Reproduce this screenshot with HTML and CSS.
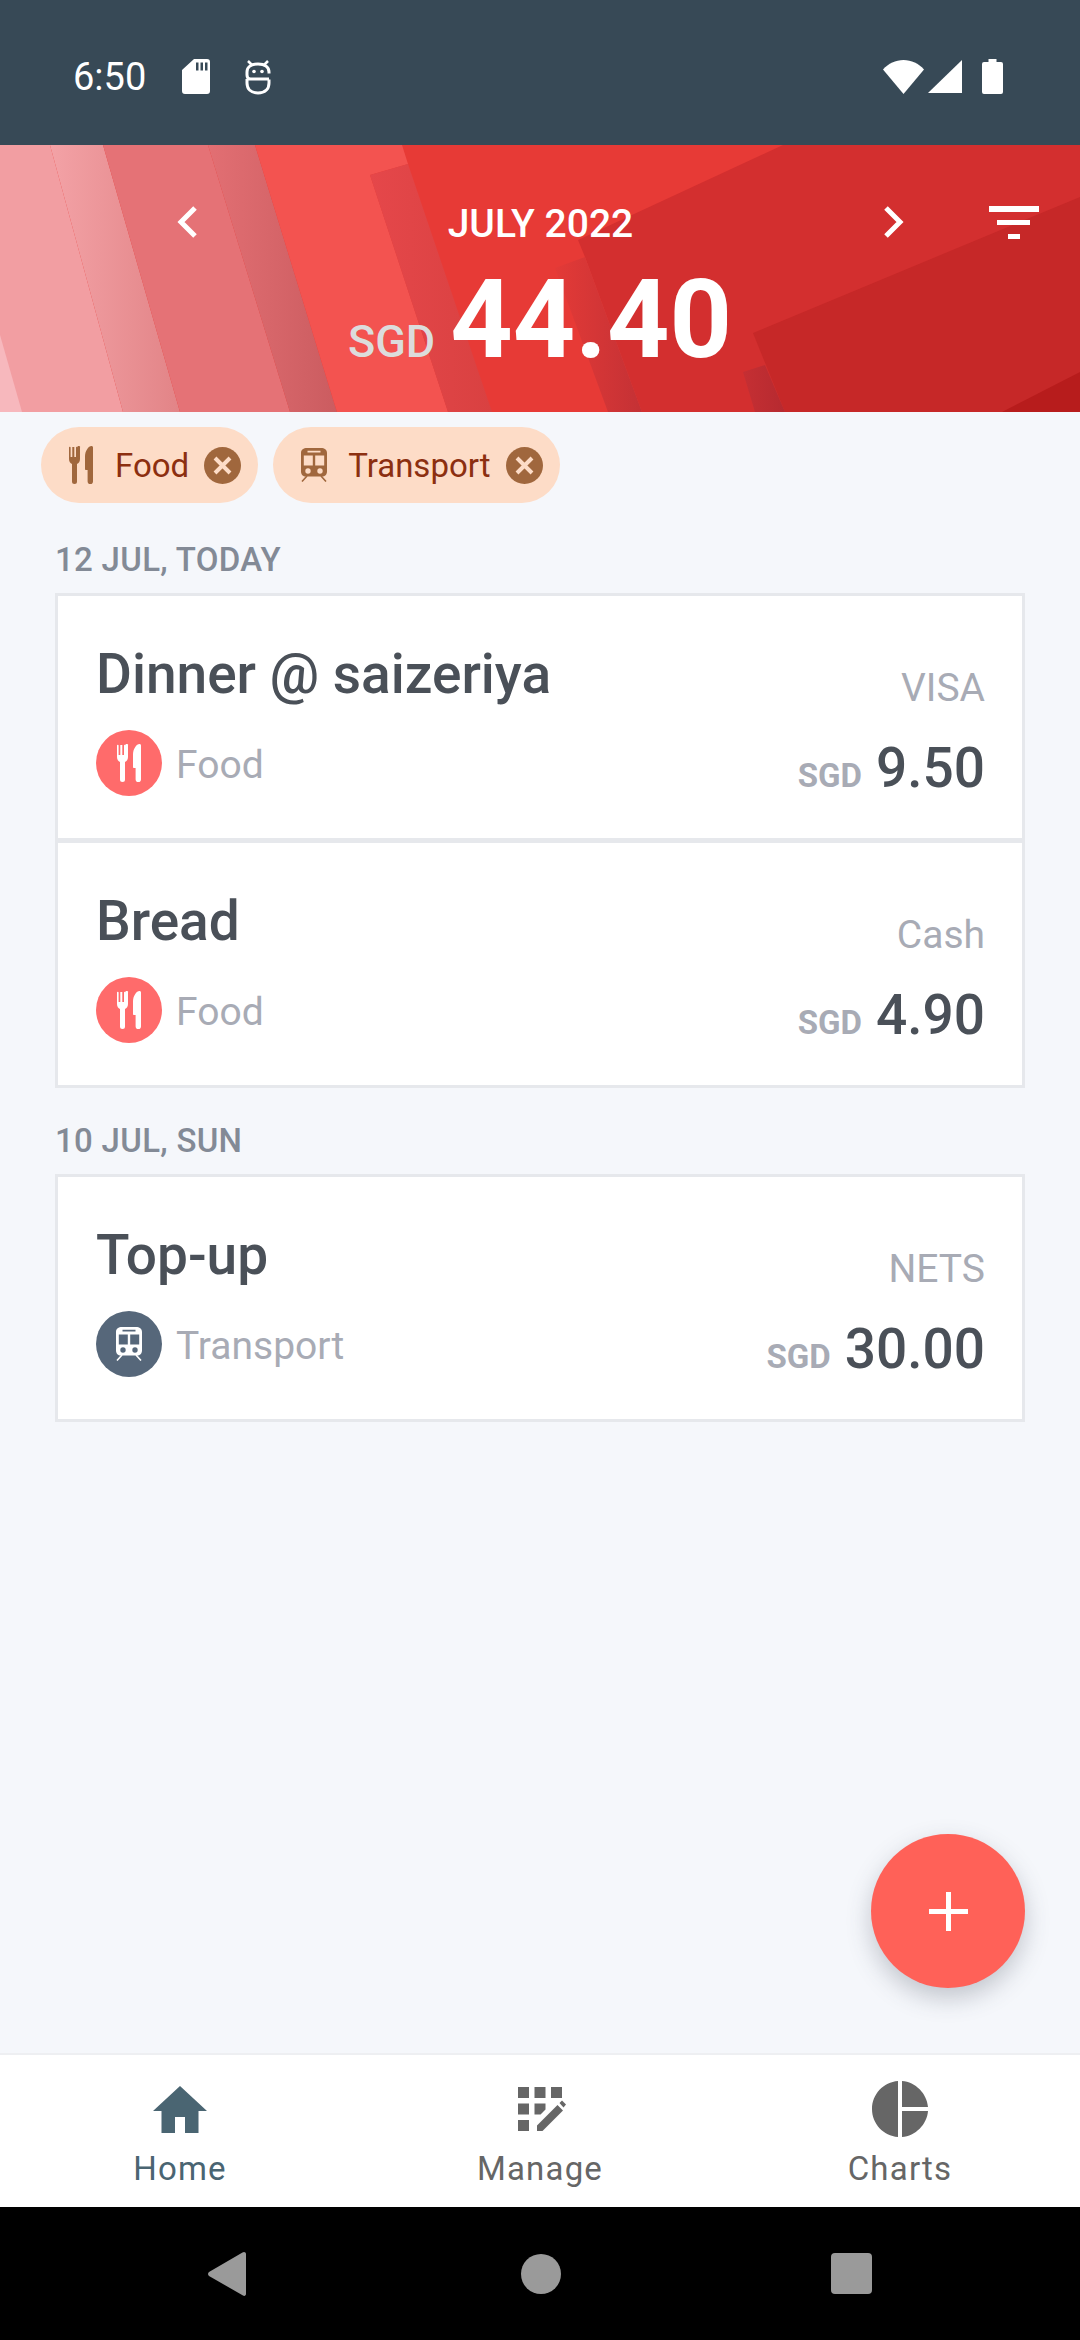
FILE: index.html
```html
<!DOCTYPE html>
<html lang="en">
<head>
    <meta charset="UTF-8">
    <title>Expenses</title>
    <link rel="stylesheet" href="styles.css">
</head>
<body>
    <svg class="defs" width="0" height="0">
        <symbol id="food" viewBox="0 0 24 38">
            <path d="M0 1.500a.8.8 0 0 1 1.600 0V11h1.700V1h2v10h1.700V1.500a.8.8 0 0 1 1.600 0V0h0 1.400a1 1 0 0 1 1 1.500V13c0 2.500-1.300 4.300-3 5v17.500a2.500 2.500 0 0 1-5 0V18c-1.700-.7-3-2.500-3-5z"/>
            <path d="M22.500 0c.9 0 1.500.6 1.500 1.500v34a2.700 2.700 0 0 1-5.400 0V24h-1.800c-.5 0-.8-.3-.8-.8V10C16 5 19.500 0 22.500 0z"/>
        </symbol>
        <symbol id="train" viewBox="0 0 26 34">
            <path fill-rule="evenodd" d="M6 0h14c3.500 0 6 1.500 6 5v18.500c0 3-2 5-5 5H5c-3 0-5-2-5-5V5c0-3.500 2.500-5 6-5zM6.500 2.800v1.700h13V2.800zM2.800 7.500v10h9v-10zm11.400 0v10h9v-10zM7 20.300a2.700 2.700 0 1 0 0 5.400 2.700 2.700 0 0 0 0-5.400zm12 0a2.700 2.700 0 1 0 0 5.400 2.700 2.700 0 0 0 0-5.400z"/>
            <path d="M6 28l-5 5.500M20 28l5 5.500" stroke="currentColor" stroke-width="1.600" fill="none"/>
        </symbol>
        <symbol id="clear" viewBox="0 0 37 37">
            <circle cx="18.500" cy="18.500" r="18.500"/>
            <path d="M11 11l15 15M26 11L11 26" stroke="#fddcc7" stroke-width="4" fill="none"/>
        </symbol>
    </svg>

    <div class="app">
        <div class="status-bar">
            <span class="clock">6:50</span>
            <svg class="sd-icon" viewBox="0 0 28 35"><path fill-rule="evenodd" d="M12 0h13a3 3 0 0 1 3 3v29a3 3 0 0 1-3 3H3a3 3 0 0 1-3-3V11zM14 3.500v8h2.500v-8zm4.500 0v8H21v-8zm4.500 0v8h2.500v-8z" fill="#fff"/></svg>
            <svg class="dev-icon" viewBox="0 0 26 36" fill="none" stroke="#fff" stroke-width="3"><path d="M24 20H5.500C3 20 2 18 2 16v-3c0-5 4-8 11-8s11 3 11 8v1.500M2 20v4c0 6 4 10 11 10s11-4 11-10v-3.500"/><path d="M3 2l4 4M23 2l-4 4" stroke-width="2.500"/><circle cx="9" cy="12.500" r="1.800" fill="#fff" stroke="none"/><circle cx="17" cy="12.500" r="1.800" fill="#fff" stroke="none"/></svg>
            <div class="status-right">
                <svg class="wifi-icon" viewBox="0 0 41 34"><path d="M0 9.500C5.500 3.500 12.500 0 20.500 0S35.500 3.500 41 9.500L20.500 34z" fill="#fff"/></svg>
                <svg class="signal-icon" viewBox="0 0 34 33"><path d="M34 0v33H0z" fill="#fff"/></svg>
                <svg class="battery-icon" viewBox="0 0 21 35"><path d="M6.500 0h8v3H19a2 2 0 0 1 2 2v28a2 2 0 0 1-2 2H2a2 2 0 0 1-2-2V5a2 2 0 0 1 2-2h4.500z" fill="#fff"/></svg>
            </div>
        </div>

        <header class="summary">
            <svg class="summary-bg" viewBox="0 0 1080 267" preserveAspectRatio="none">
                <defs>
                    <linearGradient id="fadeA" x1="0" x2="1" y1="0" y2="0">
                        <stop offset="0" stop-color="#f3a2a6"/>
                        <stop offset="1" stop-color="#e28487"/>
                    </linearGradient>
                    <linearGradient id="fadeC" x1="0" x2="1" y1="0" y2="0">
                        <stop offset="0" stop-color="#e26f73"/>
                        <stop offset="1" stop-color="#cb5c60"/>
                    </linearGradient>
                    <linearGradient id="fadeD" x1="0" x2="1" y1="0" y2="0">
                        <stop offset="0" stop-color="#e5474a"/>
                        <stop offset="1" stop-color="#d94141"/>
                    </linearGradient>
                    <linearGradient id="fadeE" x1="0" x2="1" y1="0" y2="0">
                        <stop offset="0" stop-color="#e33a37"/>
                        <stop offset="1" stop-color="#c43135"/>
                    </linearGradient>
                    <linearGradient id="fadeF" x1="0" x2="1" y1="0" y2="0">
                        <stop offset="0" stop-color="#c52f33"/>
                        <stop offset="1" stop-color="#b62a30"/>
                    </linearGradient>
                </defs>
                <rect width="1080" height="267" fill="#e73a36"/>
                <polygon points="0,0 50,0 123,267 0,267" fill="#f29ea2"/>
                <polygon points="0,190 22,267 0,267" fill="#f7b8bd"/>
                <polygon points="50,0 103,0 180,267 123,267" fill="url(#fadeA)"/>
                <polygon points="103,0 208,0 290,267 180,267" fill="#e57276"/>
                <polygon points="208,0 255,0 337,267 290,267" fill="url(#fadeC)"/>
                <polygon points="255,0 402,0 408,19 370,30 448,267 337,267" fill="#f35350"/>
                <polygon points="370,30 408,19 492,267 448,267" fill="url(#fadeD)"/>
                <polygon points="783,0 1080,0 1080,267 642,267 585,112 578,95" fill="#d32f2f"/>
                <polygon points="555,123 585,112 642,267 608,267" fill="url(#fadeE)"/>
                <polygon points="1080,52 753,188 785,267 1080,267" fill="#c62828"/>
                <polygon points="743,227 765,220 785,267 755,267" fill="url(#fadeF)"/>
                <polygon points="1080,227 1002,267 1080,267" fill="#b71c1c"/>
            </svg>
            <div class="summary-nav">
                <svg class="chevron" viewBox="0 0 20 32" fill="none" stroke="#fff" stroke-width="5"><path d="M18 2L4 16l14 14"/></svg>
                <span class="month">JULY 2022</span>
                <svg class="chevron" viewBox="0 0 20 32" fill="none" stroke="#fff" stroke-width="5"><path d="M2 2l14 14L2 30"/></svg>
                <svg class="filter-icon" viewBox="0 0 50 33"><path d="M0 0h50v6H0zM8 14h33v5H8zM19 28h12v5H19z" fill="#fff"/></svg>
            </div>
            <div class="total">
                <span class="total-cur">SGD</span>
                <span class="total-num">44.40</span>
            </div>
        </header>

        <main class="content">
            <div class="chips">
                <div class="chip">
                    <svg class="chip-food"><use href="#food"/></svg>
                    <span>Food</span>
                    <svg class="chip-clear"><use href="#clear"/></svg>
                </div>
                <div class="chip">
                    <svg class="chip-train"><use href="#train"/></svg>
                    <span>Transport</span>
                    <svg class="chip-clear"><use href="#clear"/></svg>
                </div>
            </div>

            <div class="day">12 JUL, TODAY</div>
            <div class="card">
                <div class="card-left">
                    <div class="title">Dinner @ saizeriya</div>
                    <div class="cat">
                        <span class="badge badge-food"><svg class="badge-fork"><use href="#food"/></svg></span>
                        <span class="cat-name">Food</span>
                    </div>
                </div>
                <div class="card-right">
                    <div class="method">VISA</div>
                    <div class="amount"><span class="cur">SGD</span>9.50</div>
                </div>
            </div>
            <div class="card">
                <div class="card-left">
                    <div class="title">Bread</div>
                    <div class="cat">
                        <span class="badge badge-food"><svg class="badge-fork"><use href="#food"/></svg></span>
                        <span class="cat-name">Food</span>
                    </div>
                </div>
                <div class="card-right">
                    <div class="method">Cash</div>
                    <div class="amount"><span class="cur">SGD</span>4.90</div>
                </div>
            </div>

            <div class="day">10 JUL, SUN</div>
            <div class="card">
                <div class="card-left">
                    <div class="title">Top-up</div>
                    <div class="cat">
                        <span class="badge badge-train"><svg class="badge-tram"><use href="#train"/></svg></span>
                        <span class="cat-name">Transport</span>
                    </div>
                </div>
                <div class="card-right">
                    <div class="method">NETS</div>
                    <div class="amount"><span class="cur">SGD</span>30.00</div>
                </div>
            </div>

            <button class="fab">
                <svg viewBox="0 0 39 39" width="39" height="39"><path d="M17 0h5v17h17v5H22v17h-5V22H0v-5h17z" fill="#fff"/></svg>
            </button>
        </main>

        <nav class="tabs">
            <div class="tab tab-on">
                <div class="tab-icon"><svg width="54" height="47" viewBox="0 0 54 47"><path d="M22 47V31h10v16h13.500V25H54L27 0 0 25h8.500v22z" fill="#4a6572"/></svg></div>
                <span>Home</span>
            </div>
            <div class="tab">
                <div class="tab-icon"><svg width="51" height="44" viewBox="-3 0 51 44" fill="#666"><path d="M0 0h11v11H0zM16.500 0h11v11h-11zM33 0h11v11H33zM0 16.500h11v11H0zM16.500 16.500h11v6l-5 5h-6zM0 33h11v11H0zM19 44v-5.500L39.500 18l5.500 5.500L24.500 44zM41.500 16l2.500-2.500 4 4-2.500 3z"/></svg></div>
                <span>Manage</span>
            </div>
            <div class="tab">
                <div class="tab-icon"><svg width="56" height="56" viewBox="0 0 56 56" fill="#666"><path d="M26 0v56C11.500 55 0 42.700 0 28S11.500 1 26 0zM30 0c13.500 1 25 12.500 26 26H30zM30 30h26c-1 13.500-12.500 25-26 26z"/></svg></div>
                <span>Charts</span>
            </div>
        </nav>

        <div class="sys-nav">
            <svg class="sys-back" viewBox="0 0 38 44"><path d="M36 0c1 0 2 .8 2 2v40c0 1.500-1.500 2.500-3 1.500L1 24c-1.300-1-1.300-3 0-4L34.500.5c.5-.3 1-.5 1.500-.5z" fill="#9a9a9a"/></svg>
            <span class="sys-home"></span>
            <span class="sys-recent"></span>
        </div>
    </div>
</body>
</html>
```

FILE: styles.css
```css
body {
    margin: 0;
    font-family: Roboto, sans-serif;
    background-color: #f5f7fb;
}
.defs {
    display: block;
    height: 0;
}
.app {
    display: flex;
    flex-direction: column;
    width: 1080px;
    height: 2340px;
    overflow: hidden;
}
.status-bar {
    display: flex;
    align-items: center;
    height: 145px;
    padding: 8px 77px 0 73px;
    box-sizing: border-box;
    background-color: #374956;
    color: white;
}
.clock {
    font-size: 38px;
    margin-right: 36px;
}
.sd-icon {
    width: 28px;
    height: 35px;
    margin-right: 35px;
}
.dev-icon {
    width: 26px;
    height: 36px;
}
.status-right {
    display: flex;
    align-items: center;
    gap: 4px;
    margin-left: auto;
}
.wifi-icon {
    width: 41px;
    height: 34px;
}
.signal-icon {
    width: 34px;
    height: 33px;
    margin-right: 16px;
}
.battery-icon {
    width: 21px;
    height: 35px;
}
.summary {
    position: relative;
    height: 267px;
    color: white;
}
.summary-bg {
    position: absolute;
    top: 0;
    left: 0;
    width: 100%;
    height: 100%;
}
.summary-nav {
    position: relative;
    display: flex;
    align-items: center;
    height: 34px;
    padding: 60px 41px 0 177px;
}
.chevron {
    width: 20px;
    height: 32px;
}
.month {
    flex: 1;
    padding-top: 4px;
    text-align: center;
    font-size: 39px;
    font-weight: 500;
}
.filter-icon {
    width: 50px;
    height: 33px;
    margin-left: 85px;
}
.total {
    position: relative;
    display: flex;
    justify-content: center;
    align-items: baseline;
    gap: 15px;
    margin-top: 21px;
    line-height: 120px;
}
.total-cur {
    font-size: 45px;
    font-weight: 500;
    color: #dcdcdc;
}
.total-num {
    font-size: 109px;
    font-weight: 700;
}
.content {
    position: relative;
    flex: 1;
    padding: 15px 55px 0 55px;
}
.chips {
    display: flex;
    gap: 15px;
    margin-left: -14px;
    padding-bottom: 4px;
}
.chip {
    display: flex;
    align-items: center;
    height: 76px;
    padding: 0 17px 0 28px;
    border-radius: 38px;
    background-color: #fddcc7;
    color: #8c2f10;
    font-size: 33px;
    fill: #a0673d;
}
.chip-food {
    width: 24px;
    height: 38px;
    margin-right: 22px;
}
.chip-train {
    width: 26px;
    height: 34px;
    margin-right: 21px;
    color: #a0673d;
}
.chip-clear {
    width: 37px;
    height: 37px;
    margin-left: 15px;
}
.day {
    margin: 33px 0 13px 0;
    font-size: 33px;
    font-weight: 500;
    line-height: 40px;
    letter-spacing: 0.3px;
    color: #838a96;
}
.card {
    display: flex;
    justify-content: space-between;
    height: 248px;
    padding: 48px 37px 0 38px;
    box-sizing: border-box;
    border: 3px solid #e6e8ec;
    background-color: white;
}
.card + .card {
    margin-top: -1px;
}
.title {
    font-size: 55px;
    font-weight: 500;
    line-height: 60px;
    color: #4a5058;
}
.cat {
    display: flex;
    align-items: center;
    gap: 14px;
    margin-top: 26px;
    font-size: 39px;
    color: #a8abb5;
}
.cat-name {
    padding-top: 3px;
}
.badge {
    display: flex;
    align-items: center;
    justify-content: center;
    width: 66px;
    height: 66px;
    border-radius: 50%;
}
.badge-food {
    background-color: #ff6b6b;
    fill: white;
}
.badge-train {
    background-color: #56677a;
    fill: white;
    color: white;
}
.badge-fork {
    width: 24px;
    height: 38px;
}
.badge-tram {
    width: 26px;
    height: 34px;
}
.card-right {
    text-align: right;
}
.method {
    margin-top: 22px;
    font-size: 39px;
    line-height: 44px;
    color: #a8abb5;
}
.amount {
    margin-top: 28px;
    font-size: 55px;
    font-weight: 500;
    line-height: 60px;
    color: #4a5058;
}
.cur {
    margin-right: 14px;
    font-size: 33px;
    font-weight: 700;
    color: #a8abb5;
}
.fab {
    position: absolute;
    top: 1422px;
    left: 871px;
    display: flex;
    align-items: center;
    justify-content: center;
    width: 154px;
    height: 154px;
    padding: 0;
    border: 0;
    border-radius: 50%;
    background-color: #ff6158;
    box-shadow: 0 10px 24px rgba(60, 70, 85, 0.28);
}
.tabs {
    display: flex;
    height: 154px;
    padding-top: 26px;
    border-top: 2px solid #eeeff2;
    box-sizing: border-box;
    background-color: white;
}
.tab {
    flex: 1;
    display: flex;
    flex-direction: column;
    align-items: center;
    font-size: 33px;
    letter-spacing: 1.2px;
    color: #666;
}
.tab-on {
    color: #4a6572;
}
.tab-icon {
    display: flex;
    align-items: center;
    justify-content: center;
    height: 56px;
}
.tab span {
    margin-top: 12px;
}
.sys-nav {
    display: flex;
    align-items: center;
    justify-content: center;
    height: 133px;
    background-color: black;
}
.sys-back {
    width: 38px;
    height: 44px;
    margin-right: 275px;
}
.sys-home {
    width: 40px;
    height: 40px;
    margin-right: 270px;
    border-radius: 50%;
    background-color: #9a9a9a;
}
.sys-recent {
    width: 41px;
    height: 41px;
    border-radius: 4px;
    background-color: #9a9a9a;
}
```
